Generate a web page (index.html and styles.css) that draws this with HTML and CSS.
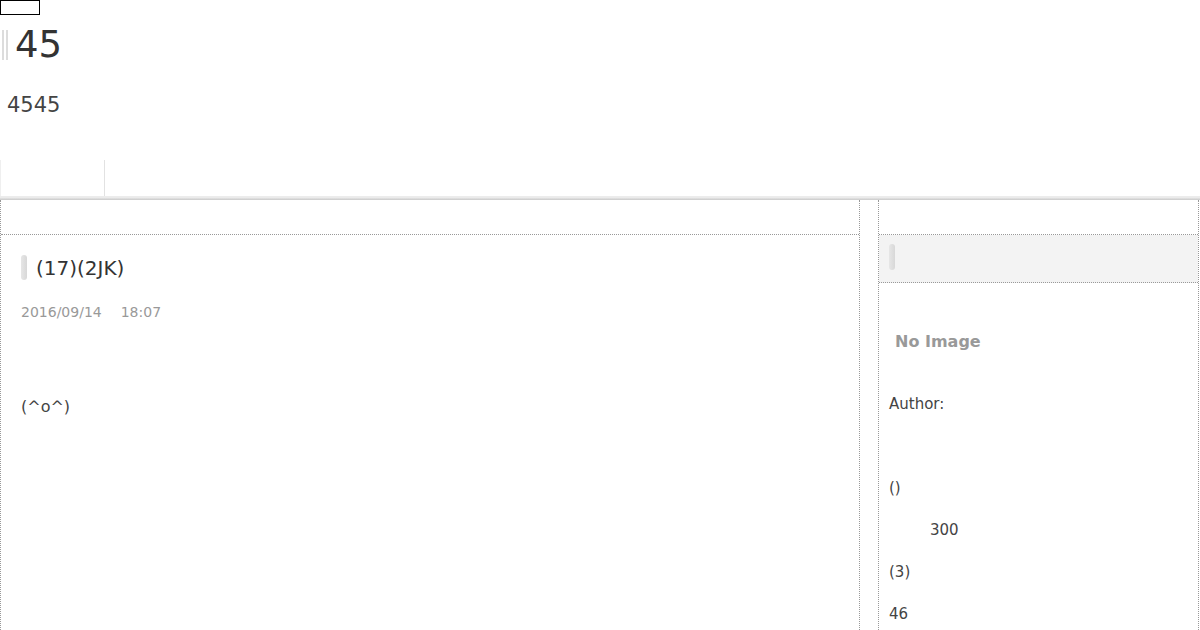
FILE: index.html
```html
<!DOCTYPE html>
<html lang="ja">
<head>
    <meta charset="UTF-8">
    <meta name="viewport" content="width=device-width, initial-scale=1.0">
    <title>45</title>
    <link rel="stylesheet" href="styles.css">
</head>
<body>
    <div class="header">
        <input class="search" type="text">
        <h1 class="site-title">45</h1>
        <p class="site-desc">4545</p>
    </div>

    <div class="nav">
        <div class="nav-item"></div>
    </div>
    <div class="nav-shadow"></div>

    <div class="main">
        <div class="content">
            <div class="col-top"></div>
            <div class="article">
                <div class="article-title">
                    <span class="bar"></span>
                    <span>(17)(2JK)</span>
                </div>
                <div class="article-date">2016/09/14<span class="time">18:07</span></div>
                <div class="article-body">(^o^)</div>
            </div>
        </div>

        <div class="sidebar">
            <div class="col-top"></div>
            <div class="widget-title"><span class="bar"></span></div>
            <div class="widget">
                <div class="no-image">No Image</div>
                <p>Author:</p>
                <p>&nbsp;</p>
                <p>()</p>
                <p class="indent">300</p>
                <p>(3)</p>
                <p>46</p>
            </div>
        </div>
    </div>
</body>
</html>
```

FILE: styles.css
```css
body {
    margin: 0;
    background-color: white;
    color: #444;
    font-family: "DejaVu Sans", "Noto Sans CJK JP", sans-serif;
}
.search {
    display: block;
    width: 40px;
    height: 15px;
    box-sizing: border-box;
    border: 1px solid black;
    margin: 0;
    padding: 0;
}
.site-title {
    margin: 15px 0 0 2px;
    padding-left: 7px;
    border-left: 6px double #dcdcdc;
    font-size: 37px;
    font-weight: normal;
    line-height: 30px;
    color: #333;
}
.site-desc {
    margin: 33px 0 0 0;
    padding-left: 7px;
    font-size: 21px;
    line-height: 24px;
}
.nav {
    margin-top: 43px;
    height: 36px;
    border-bottom: 1px solid #ececec;
}
.nav-item {
    width: 103px;
    height: 36px;
    border-left: 1px solid #efefef;
    border-right: 1px solid #e2e2e2;
}
.nav-shadow {
    height: 3px;
    background: linear-gradient(#f2f2f2, #c9c9c9);
}
.main {
    display: flex;
    align-items: flex-start;
    min-height: 460px;
}
.content {
    width: 860px;
    min-height: 460px;
    box-sizing: border-box;
    border-left: 1px dotted #999;
    border-right: 1px dotted #999;
    margin-right: 18px;
}
.sidebar {
    width: 321px;
    min-height: 460px;
    box-sizing: border-box;
    border-left: 1px dotted #999;
    border-right: 1px dotted #999;
}
.col-top {
    height: 34px;
    border-bottom: 1px dotted #999;
}
.article {
    padding: 20px 20px;
}
.bar {
    display: inline-block;
    width: 6px;
    border-radius: 3px;
    background: linear-gradient(to right, #e6e6e6, #d8d8d8);
}
.article-title {
    display: flex;
    align-items: center;
    font-size: 20px;
    line-height: 24px;
    color: #333;
}
.article-title .bar {
    height: 25px;
    margin-right: 9px;
}
.article-date {
    margin-top: 22px;
    font-size: 14px;
    line-height: 20px;
    color: #999;
}
.article-date .time {
    margin-left: 19px;
}
.article-body {
    margin-top: 73px;
    font-size: 16px;
    line-height: 24px;
}
.widget-title {
    height: 48px;
    padding: 9px 10px 0;
    box-sizing: border-box;
    background-color: #f3f3f3;
    border-bottom: 1px dotted #999;
}
.widget-title .bar {
    height: 26px;
}
.widget {
    padding-left: 10px;
}
.no-image {
    margin: 49px 0 0 6px;
    font-size: 16px;
    font-weight: bold;
    line-height: 20px;
    color: #999;
}
.widget p {
    margin: 0;
    font-size: 15px;
    line-height: 42px;
}
.widget p:first-of-type {
    margin-top: 31px;
}
.widget .indent {
    padding-left: 41px;
}
```
